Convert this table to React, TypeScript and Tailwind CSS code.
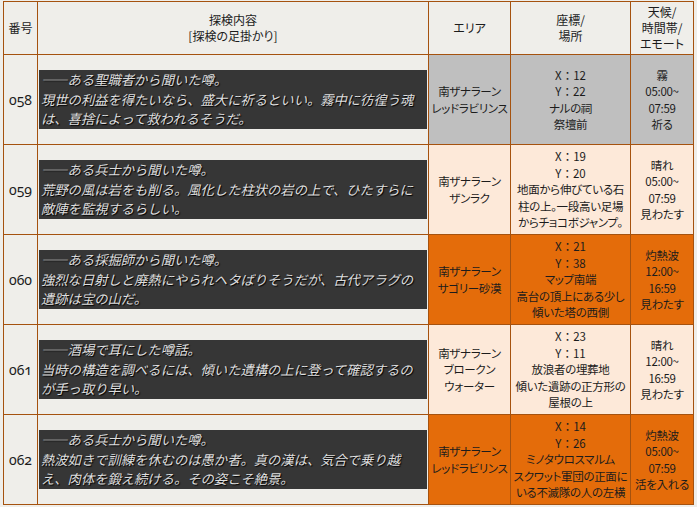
import React from 'react';

type Tone = 'gray' | 'peach' | 'orange';

type Row = {
  no: string;
  hint: string[];
  area: string[];
  place: string[];
  weather: string[];
  tone: Tone;
};

const rows: Row[] = [
  {
    no: '058',
    hint: [
      '――ある聖職者から聞いた噂。',
      '現世の利益を得たいなら、盛大に祈るといい。霧中に彷徨う魂',
      'は、喜捨によって救われるそうだ。',
    ],
    area: ['南ザナラーン', 'レッドラビリンス'],
    place: ['X：12', 'Y：22', 'ナルの祠', '祭壇前'],
    weather: ['霧', '05:00~', '07:59', '祈る'],
    tone: 'gray',
  },
  {
    no: '059',
    hint: [
      '――ある兵士から聞いた噂。',
      '荒野の風は岩をも削る。風化した柱状の岩の上で、ひたすらに',
      '敵陣を監視するらしい。',
    ],
    area: ['南ザナラーン', 'ザンラク'],
    place: ['X：19', 'Y：20', '地面から伸びている石', '柱の上。一段高い足場', 'からチョコボジャンプ。'],
    weather: ['晴れ', '05:00~', '07:59', '見わたす'],
    tone: 'peach',
  },
  {
    no: '060',
    hint: [
      '――ある採掘師から聞いた噂。',
      '強烈な日射しと廃熱にやられヘタばりそうだが、古代アラグの',
      '遺跡は宝の山だ。',
    ],
    area: ['南ザナラーン', 'サゴリー砂漠'],
    place: ['X：21', 'Y：38', 'マップ南端', '高台の頂上にある少し', '傾いた塔の西側'],
    weather: ['灼熱波', '12:00~', '16:59', '見わたす'],
    tone: 'orange',
  },
  {
    no: '061',
    hint: [
      '――酒場で耳にした噂話。',
      '当時の構造を調べるには、傾いた遺構の上に登って確認するの',
      'が手っ取り早い。',
    ],
    area: ['南ザナラーン', 'ブロークン', 'ウォーター'],
    place: ['X：23', 'Y：11', '放浪者の埋葬地', '傾いた遺跡の正方形の', '屋根の上'],
    weather: ['晴れ', '12:00~', '16:59', '見わたす'],
    tone: 'peach',
  },
  {
    no: '062',
    hint: [
      '――ある兵士から聞いた噂。',
      '熱波如きで訓練を休むのは愚か者。真の漢は、気合で乗り越',
      'え、肉体を鍛え続ける。その姿こそ絶景。',
    ],
    area: ['南ザナラーン', 'レッドラビリンス'],
    place: ['X：14', 'Y：26', 'ミノタウロスマルム', 'スクワット軍団の正面に', 'いる不滅隊の人の左横'],
    weather: ['灼熱波', '05:00~', '07:59', '活を入れる'],
    tone: 'orange',
  },
];

const toneBg: Record<Tone, string> = {
  gray: 'bg-[#bfbfbf]',
  peach: 'bg-[#fde9d9]',
  orange: 'bg-[#e46c0a]',
};

const cell = 'border border-[#a5520f] align-middle text-center';
const body = 'text-[11.5px] tracking-[-0.3px] leading-[16.4px]';

function Lines({ lines }: { lines: string[] }) {
  return (
    <>
      {lines.map((l, i) => (
        <div
          key={i}
          className={`whitespace-nowrap ${/^[XY]：/.test(l) ? '[font-feature-settings:normal] tracking-normal' : ''}`}
        >
          {l}
        </div>
      ))}
    </>
  );
}

export default function App() {
  return (
    <div className="min-h-screen bg-[#efeeea] pl-[3px] pt-px font-['Noto_Sans_CJK_JP',sans-serif] text-[12px] text-[#1c1c1c] [font-feature-settings:'palt']">
      <table className="w-[690px] table-fixed border-collapse">
        <colgroup>
          <col className="w-[34px]" />
          <col className="w-[391px]" />
          <col className="w-[82px]" />
          <col className="w-[120px]" />
          <col className="w-[63px]" />
        </colgroup>
        <thead>
          <tr className="h-[53px]">
            <th className={`${cell} font-normal leading-[16px]`}>番号</th>
            <th className={`${cell} font-normal leading-[16px]`}>
              <Lines lines={['探検内容', '[探検の足掛かり]']} />
            </th>
            <th className={`${cell} font-normal leading-[16px]`}>エリア</th>
            <th className={`${cell} font-normal leading-[16px]`}>
              <Lines lines={['座標/', '場所']} />
            </th>
            <th className={`${cell} font-normal leading-[16px]`}>
              <Lines lines={['天候/', '時間帯/', 'エモート']} />
            </th>
          </tr>
        </thead>
        <tbody>
          {rows.map((r) => (
            <tr key={r.no} className="h-[90px]">
              <td className={`${cell} font-['Noto_Sans','Liberation_Serif',serif] text-[14px] oldstyle-nums [font-feature-settings:'onum']`}>
                {r.no}
              </td>
              <td className={`${cell} px-[1px] text-left`}>
                <div className="bg-[#363636] px-[2px] text-[13.3px] leading-[19.6px] italic text-[#dedede] [font-feature-settings:normal] [text-shadow:1px_1px_1px_#000]">
                  <Lines lines={r.hint} />
                </div>
              </td>
              <td className={`${cell} ${toneBg[r.tone]} ${body}`}>
                <Lines lines={r.area} />
              </td>
              <td className={`${cell} ${toneBg[r.tone]} ${body}`}>
                <Lines lines={r.place} />
              </td>
              <td className={`${cell} ${toneBg[r.tone]} ${body}`}>
                <Lines lines={r.weather} />
              </td>
            </tr>
          ))}
        </tbody>
      </table>
    </div>
  );
}
